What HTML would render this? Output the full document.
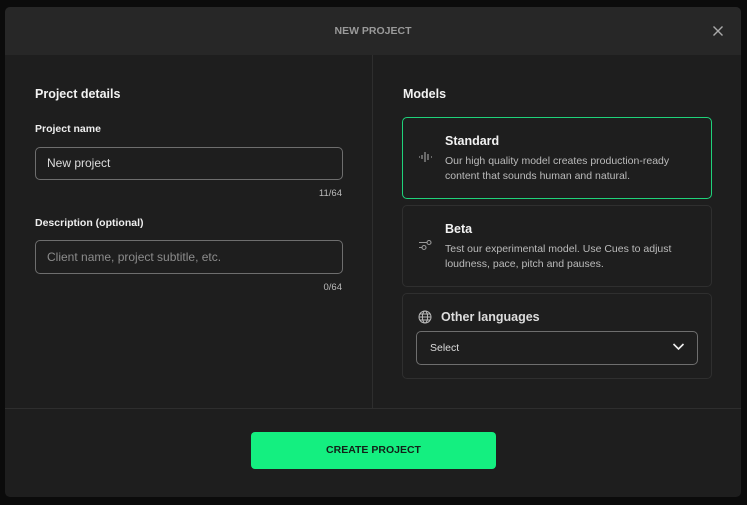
<!DOCTYPE html>
<html><head><meta charset="utf-8"><style>
*{margin:0;padding:0;box-sizing:border-box}
body{width:747px;height:505px;background:#0b0b0b;font-family:"Liberation Sans",sans-serif;position:relative;overflow:hidden;color:#eee}
.a{position:absolute}
.modal{left:5px;top:7px;width:736px;height:490px;background:#1e1e1e;border-radius:5px;overflow:hidden}
.hdr{left:0;top:0;width:736px;height:48px;background:#272727}
.t{white-space:nowrap;line-height:1}
.inp{border:1px solid #6e6e6e;border-radius:5px;background:#1e1e1e}
.card{border:1px solid #2f2f2f;border-radius:5px;background:#1e1e1e}
</style></head><body>
<div class="a modal">
 <div class="a hdr"></div>
 <div class="a t" style="left:0;width:736px;text-align:center;top:19px;font-size:10.5px;font-weight:bold;color:#9a9a9a">NEW PROJECT</div>
 <svg class="a" style="left:707px;top:18px" width="12" height="12" viewBox="0 0 12 12"><path d="M1.5 1.5L10.5 10.5M10.5 1.5L1.5 10.5" stroke="#aaa" stroke-width="1.4"/></svg>
 <div class="a" style="left:367px;top:48px;width:1px;height:353px;background:#2e2e2e"></div>
 <div class="a" style="left:0;top:401px;width:736px;height:1px;background:#2e2e2e"></div>

 <div class="a t" style="left:30px;top:81px;font-size:12.5px;font-weight:bold;color:#f2f2f2">Project details</div>
 <div class="a t" style="left:30px;top:117px;font-size:10.5px;font-weight:bold;color:#eee">Project name</div>
 <div class="a inp" style="left:30px;top:140px;width:308px;height:33px"></div>
 <div class="a t" style="left:42px;top:150px;font-size:12px;color:#ddd">New project</div>
 <div class="a t" style="left:200px;width:137px;text-align:right;top:182px;font-size:9.5px;color:#bbb">11/64</div>
 <div class="a t" style="left:30px;top:211px;font-size:10.5px;font-weight:bold;color:#eee">Description (optional)</div>
 <div class="a inp" style="left:30px;top:233px;width:308px;height:34px"></div>
 <div class="a t" style="left:42px;top:244px;font-size:12px;color:#8c8c8c">Client name, project subtitle, etc.</div>
 <div class="a t" style="left:200px;width:137px;text-align:right;top:276px;font-size:9.5px;color:#bbb">0/64</div>

 <div class="a t" style="left:398px;top:81px;font-size:12.5px;font-weight:bold;color:#f2f2f2">Models</div>
 <div class="a card" style="left:397px;top:110px;width:310px;height:82px;border-color:#1fd27a"></div>
 <svg class="a" style="left:413px;top:144px" width="16" height="12" viewBox="0 0 16 12"><path d="M1 6h1M4 4v4M7 1v10M10 3v6M13 6h1" stroke="#999" stroke-width="1.2"/></svg>
 <div class="a t" style="left:440px;top:128px;font-size:12.5px;font-weight:bold;color:#f2f2f2">Standard</div>
 <div class="a t" style="left:440px;top:147px;font-size:10.5px;color:#bbb;line-height:15px">Our high quality model creates production-ready<br>content that sounds human and natural.</div>

 <div class="a card" style="left:397px;top:198px;width:310px;height:82px"></div>
 <svg class="a" style="left:413px;top:232px" width="15" height="12" viewBox="0 0 15 12"><path d="M1 3.5h8M1 8.5h3" stroke="#999" stroke-width="1.1"/><circle cx="11" cy="3.5" r="2" fill="none" stroke="#999" stroke-width="1.1"/><circle cx="6" cy="8.5" r="2" fill="none" stroke="#999" stroke-width="1.1"/></svg>
 <div class="a t" style="left:440px;top:216px;font-size:12.5px;font-weight:bold;color:#f2f2f2">Beta</div>
 <div class="a t" style="left:440px;top:235px;font-size:10.5px;color:#bbb;line-height:15px">Test our experimental model. Use Cues to adjust<br>loudness, pace, pitch and pauses.</div>

 <div class="a card" style="left:397px;top:286px;width:310px;height:86px"></div>
 <svg class="a" style="left:413px;top:303px" width="14" height="14" viewBox="0 0 14 14" fill="none" stroke="#bbb" stroke-width="1"><circle cx="7" cy="7" r="6"/><ellipse cx="7" cy="7" rx="2.6" ry="6"/><path d="M1 7h12M2 4h10M2 10h10"/></svg>
 <div class="a t" style="left:436px;top:304px;font-size:12.5px;font-weight:bold;color:#ddd">Other languages</div>
 <div class="a inp" style="left:411px;top:324px;width:282px;height:34px"></div>
 <div class="a t" style="left:425px;top:336px;font-size:10.5px;color:#ddd">Select</div>
 <svg class="a" style="left:667px;top:335px" width="13" height="9" viewBox="0 0 13 9"><path d="M1.5 2l5 5 5-5" stroke="#eee" stroke-width="1.6" fill="none"/></svg>

 <div class="a" style="left:246px;top:425px;width:245px;height:37px;background:#14ef80;border-radius:4px"></div>
 <div class="a t" style="left:246px;width:245px;text-align:center;top:438px;font-size:10.5px;font-weight:bold;color:#112218">CREATE PROJECT</div>
</div>
</body></html>
